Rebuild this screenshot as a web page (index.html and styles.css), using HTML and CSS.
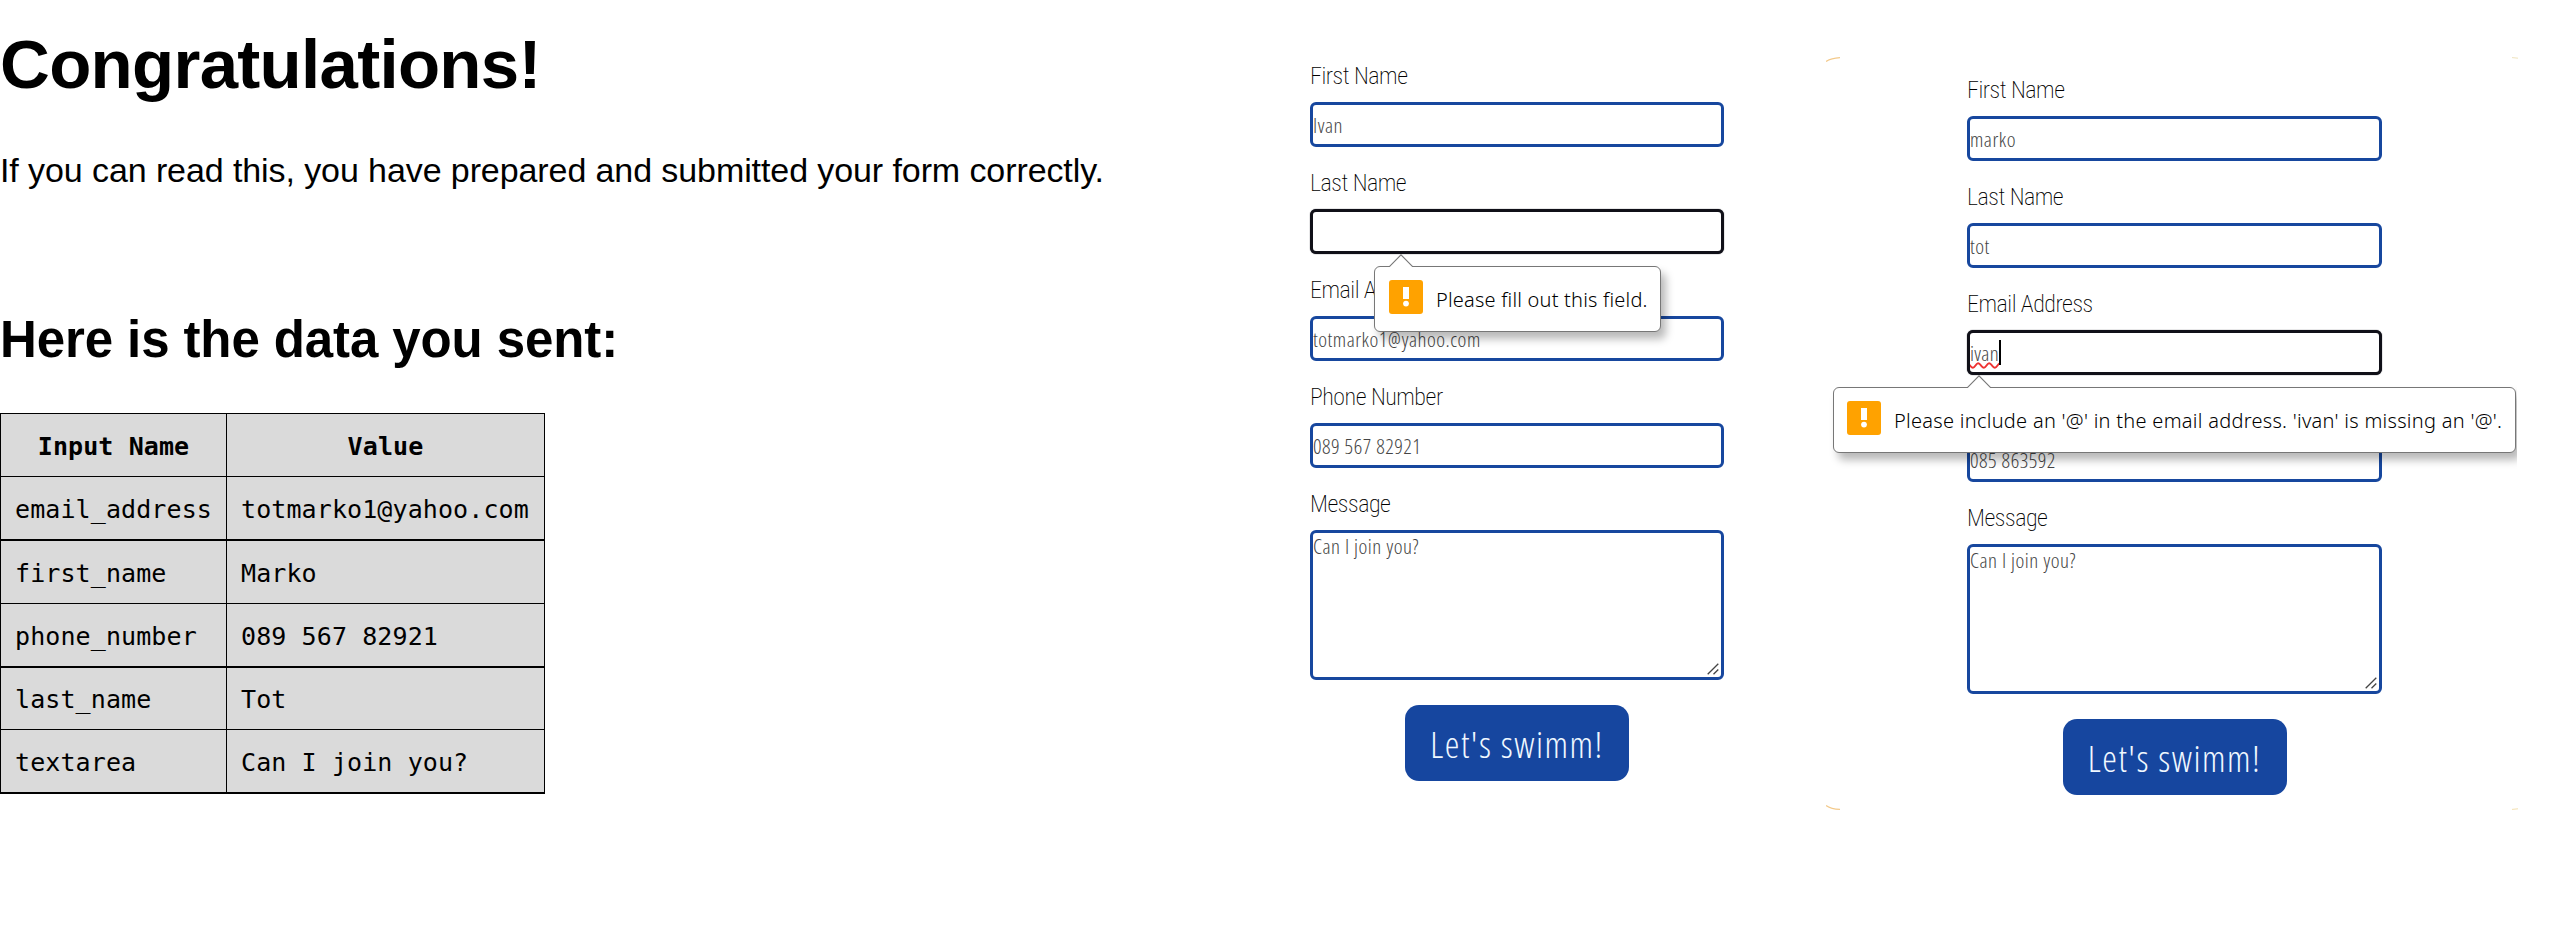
FILE: index.html
```html
<!DOCTYPE html>
<html lang="en">
<head>
<meta charset="utf-8">
<title>Form submission and validation</title>
<link rel="stylesheet" href="styles.css">
</head>
<body>
<main class="board">
  <section class="result">
    <h1 class="result-title">Congratulations!</h1>
    <p class="result-text">If you can read this, you have prepared and submitted your form correctly.</p>
    <h2 class="result-subtitle">Here is the data you sent:</h2>
    <div class="data">
      <div class="row head"><div class="cell">Input Name</div><div class="cell">Value</div></div>
      <div class="row thick"><div class="cell">email_address</div><div class="cell">totmarko1@yahoo.com</div></div>
      <div class="row"><div class="cell">first_name</div><div class="cell">Marko</div></div>
      <div class="row thick"><div class="cell">phone_number</div><div class="cell">089 567 82921</div></div>
      <div class="row short"><div class="cell">last_name</div><div class="cell">Tot</div></div>
      <div class="row thick"><div class="cell">textarea</div><div class="cell">Can I join you?</div></div>
    </div>
  </section>

  <section class="form form-first">
    <div class="field"><div class="label">First Name</div><div class="input">Ivan</div></div>
    <div class="field">
      <div class="label">Last Name</div>
      <div class="input focused"></div>
      <div class="tip tip-short">
        <svg class="tip-arrow" width="24" height="13" viewBox="0 0 24 13"><path d="M0 13 L12 .8 L24 13" fill="#fff" stroke="#777" stroke-width="1.1"/></svg>
        <svg class="tip-icon" width="34" height="34" viewBox="0 0 34 34"><rect width="34" height="34" rx="3" fill="#ffa200"/><path d="M14 7h6v12h-6z" fill="#fff"/><circle cx="17" cy="23.6" r="2.9" fill="#fff"/></svg>
        <span class="tip-text">Please fill out this field.</span>
      </div>
    </div>
    <div class="field"><div class="label">Email Address</div><div class="input">totmarko1@yahoo.com</div></div>
    <div class="field"><div class="label">Phone Number</div><div class="input">089 567 82921</div></div>
    <div class="field"><div class="label">Message</div>
      <div class="input area">Can I join you?<svg class="grip" width="12" height="12" viewBox="0 0 12 12"><path d="M.7 11.3 L11.3 .7 M6.5 11.3 L11.3 6.5" stroke="#444" stroke-width="1.3"/></svg></div>
    </div>
    <div class="button">Let's swimm!</div>
  </section>

  <section class="form form-second">
    <svg class="corner corner-tl" width="14" height="5" viewBox="0 0 14 5"><path d="M0 4.5 Q5 1 14 .6" fill="none" stroke="#f3c98a" stroke-width="1.2"/></svg>
    <svg class="corner corner-tr" width="6" height="2" viewBox="0 0 6 2"><path d="M0 .6 L6 1.2" stroke="#efe3bd"/></svg>
    <svg class="corner corner-bl" width="14" height="5" viewBox="0 0 14 5"><path d="M0 .5 Q5 4 14 4.4" fill="none" stroke="#f3c98a" stroke-width="1.2"/></svg>
    <svg class="corner corner-br" width="6" height="2" viewBox="0 0 6 2"><path d="M0 1.4 L6 .8" stroke="#f3dfae"/></svg>
    <div class="field"><div class="label">First Name</div><div class="input">marko</div></div>
    <div class="field"><div class="label">Last Name</div><div class="input">tot</div></div>
    <div class="field">
      <div class="label">Email Address</div>
      <div class="input focused"><span class="misspelt">ivan</span><span class="caret"></span></div>
      <div class="tip-clip">
        <div class="tip tip-long">
          <svg class="tip-arrow" width="24" height="13" viewBox="0 0 24 13"><path d="M0 13 L12 .8 L24 13" fill="#fff" stroke="#777" stroke-width="1.1"/></svg>
          <svg class="tip-icon" width="34" height="34" viewBox="0 0 34 34"><rect width="34" height="34" rx="3" fill="#ffa200"/><path d="M14 7h6v12h-6z" fill="#fff"/><circle cx="17" cy="23.6" r="2.9" fill="#fff"/></svg>
          <span class="tip-text">Please include an '@' in the email address. 'ivan' is missing an '@'.</span>
        </div>
      </div>
    </div>
    <div class="field"><div class="label">Phone Number</div><div class="input">085 863592</div></div>
    <div class="field"><div class="label">Message</div>
      <div class="input area">Can I join you?<svg class="grip" width="12" height="12" viewBox="0 0 12 12"><path d="M.7 11.3 L11.3 .7 M6.5 11.3 L11.3 6.5" stroke="#444" stroke-width="1.3"/></svg></div>
    </div>
    <div class="button">Let's swimm!</div>
  </section>
</main>
</body>
</html>
```
FILE: styles.css
```css
* { box-sizing: border-box; }
body { margin: 0; background: #fff; }
.board { display: flex; width: 2556px; height: 952px; overflow: hidden; }

/* submitted data */
.result {
  width: 1102px; margin-right: 208px; flex: none; overflow: hidden;
  font-family: "Liberation Sans", Arial, sans-serif; color: #000; white-space: nowrap;
}
.result-title { margin: 25px 0 0; font-size: 69px; line-height: 80px; letter-spacing: -.7px; }
.result-text { margin: 45px 0 0; font-size: 34px; line-height: 40px; letter-spacing: -.09px; }
.result-subtitle { margin: 120px 0 0; font-size: 51px; line-height: 60px; letter-spacing: -.1px; }
.data {
  width: 545px; margin-top: 43px; background: #dadada;
  border: 1px solid #000; border-bottom: 0;
  font: 25px "DejaVu Sans Mono", Consolas, monospace; letter-spacing: .1px;
}
.row { display: grid; grid-template-columns: 226px 1fr; height: 63px; border-bottom: 1px solid #000; }
.row.thick { height: 64px; border-bottom-width: 2px; }
.row.short { height: 62px; }
.cell { display: flex; align-items: center; padding-left: 14px; padding-top: 2px; }
.cell:first-child { border-right: 1px solid #000; }
.head .cell { justify-content: center; padding-left: 0; font-weight: 700; }

/* forms */
.form {
  position: relative; width: 414px; flex: none;
  font-family: Roboto, "Open Sans", sans-serif; font-weight: 200; color: #000;
}
.form-first { padding-top: 57px; margin-right: 243px; }
.form-second { padding-top: 71px; width: 415px; }
.field { position: relative; height: 107px; }
.label { height: 45px; font-size: 24px; line-height: 38px; font-stretch: 75%; letter-spacing: -.5px; }
.input {
  height: 45px; border: 3px solid #17479e; border-radius: 6px; background: #fff;
  font-family: "Open Sans", Roboto, sans-serif; font-weight: 300;
  font-size: 21px; line-height: 41px; font-stretch: 75%; letter-spacing: .5px; color: #444; white-space: nowrap;
}
.input.focused { border-color: #101018; box-shadow: 0 0 1px #101018; display: flex; }
.input.area { position: relative; height: 150px; line-height: 27px; }
.grip { position: absolute; right: 2px; bottom: 2px; }
.misspelt { text-decoration: underline wavy #e33 1.5px; text-underline-offset: 1px; letter-spacing: .3px; }
.caret { width: 2px; height: 25px; margin-top: 7px; background: #000; }
.button {
  display: flex; align-items: center; justify-content: center;
  width: 224px; height: 76px; margin: 113px auto 0; border-radius: 14px;
  background: #16469f; color: #f0f8ff;
  font-family: "Open Sans", Roboto, sans-serif; font-size: 37px; font-weight: 300; font-stretch: 75%;
  letter-spacing: 1.5px;
}

/* validation bubbles */
.tip {
  position: absolute; z-index: 2; display: flex; align-items: center; height: 66px;
  padding-left: 14px; border: 1px solid #777; border-radius: 6px; background: #fff;
  box-shadow: 5px 7px 8px rgba(0, 0, 0, .28);
  font: 350 20px "Noto Sans", "Open Sans", sans-serif; color: #000; white-space: nowrap;
}
.tip-short { left: 64px; top: 102px; width: 287px; }
.tip-clip { position: absolute; z-index: 2; left: -143px; top: 88px; width: 693px; height: 100px; overflow: hidden; }
.tip-long { left: 9px; top: 14px; width: 683px; padding-left: 13px; }
.tip-icon { flex: none; margin-top: -4px; }
.tip-text { margin-left: 13px; letter-spacing: .2px; }
.tip-long .tip-text { letter-spacing: .28px; }
.tip-arrow { position: absolute; top: -13px; left: 14px; }
.tip-long .tip-arrow { left: 133px; }

/* remains of the rounded card outline */
.corner { position: absolute; }
.corner-tl { left: -141px; top: 57px; }
.corner-tr { left: 545px; top: 57px; }
.corner-bl { left: -141px; top: 805px; }
.corner-br { left: 545px; top: 808px; }
```
